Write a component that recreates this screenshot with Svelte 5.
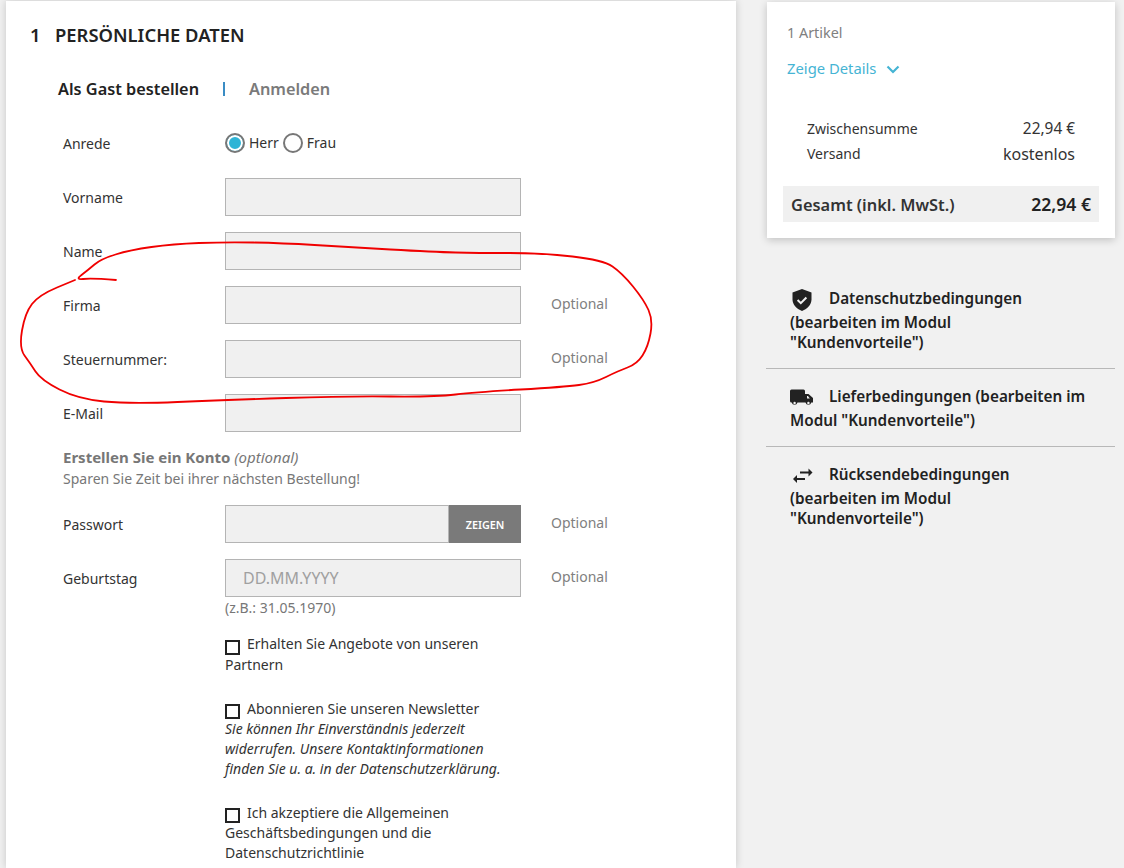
<script>
	const fields = [
		{ label: 'Vorname' },
		{ label: 'Name' },
		{ label: 'Firma', optional: true },
		{ label: 'Steuernummer:', optional: true },
		{ label: 'E-Mail' }
	];

	// hand drawn circle around the tax number fields
	const pts = [
		[116, 280], [91, 278], [75, 280], [88, 270], [101, 259], [130, 250], [173, 244], [225, 242],
		[282, 243], [347, 247], [434, 252], [477, 253], [542, 253], [603, 260], [622, 273], [644, 300],
		[653, 320], [648, 347], [637, 364], [618, 371], [594, 383], [564, 387], [477, 392], [434, 397],
		[347, 396], [225, 400], [130, 404], [78, 399], [41, 380], [30, 363], [19, 348], [25, 313],
		[39, 295], [75, 280]
	];
	let scribble = `M${pts[0][0]} ${pts[0][1]}`;
	for (let i = 1; i < pts.length - 1; i++) {
		const mx = (pts[i][0] + pts[i + 1][0]) / 2;
		const my = (pts[i][1] + pts[i + 1][1]) / 2;
		scribble += ` Q${pts[i][0]} ${pts[i][1]} ${mx} ${my}`;
	}
	scribble += ` L${pts[pts.length - 1][0]} ${pts[pts.length - 1][1]}`;
</script>

<div class="page">
	<main class="panel">
		<h2><span class="num">1</span>PERSÖNLICHE DATEN</h2>

		<div class="tabs">
			<span class="active">Als Gast bestellen</span>
			<span class="sep"></span>
			<span class="other">Anmelden</span>
		</div>

		<form>
			<div class="row anrede">
				<span class="label">Anrede</span>
				<div class="radios">
					<span class="radio checked"></span><span>Herr</span>
					<span class="radio"></span><span>Frau</span>
				</div>
			</div>

			{#each fields as f}
				<div class="row">
					<span class="label">{f.label}</span>
					<div class="input"></div>
					{#if f.optional}<span class="opt">Optional</span>{/if}
				</div>
			{/each}

			<div class="konto">
				<div class="konto-title"><b>Erstellen Sie ein Konto</b> <i>(optional)</i></div>
				<div>Sparen Sie Zeit bei ihrer nächsten Bestellung!</div>
			</div>

			<div class="row">
				<span class="label">Passwort</span>
				<div class="pw">
					<div class="input"></div>
					<button type="button">ZEIGEN</button>
				</div>
				<span class="opt">Optional</span>
			</div>

			<div class="row">
				<span class="label">Geburtstag</span>
				<div class="input date">DD.MM.YYYY</div>
				<span class="opt">Optional</span>
			</div>
			<div class="hint">(z.B.: 31.05.1970)</div>

			<div class="checks">
				<div class="check">
					<span class="box"></span>Erhalten Sie Angebote von unseren Partnern
				</div>
				<div class="check">
					<span class="box"></span>Abonnieren Sie unseren Newsletter
					<em>Sie können Ihr Einverständnis jederzeit widerrufen. Unsere Kontaktinformationen finden Sie u. a. in der Datenschutzerklärung.</em>
				</div>
				<div class="check">
					<span class="box"></span>Ich akzeptiere die Allgemeinen Geschäftsbedingungen und die Datenschutzrichtlinie
				</div>
			</div>
		</form>
	</main>

	<aside>
		<section class="card">
			<div class="count">1 Artikel</div>
			<div class="details">
				Zeige Details
				<svg width="14" height="9" viewBox="0 0 14 9"><path d="M1.5 1.5 7 7l5.5-5.5" fill="none" stroke="currentColor" stroke-width="2.2" /></svg>
			</div>
			<div class="sum"><span>Zwischensumme</span><span class="val">22,94 €</span></div>
			<div class="sum ship"><span>Versand</span><span class="val">kostenlos</span></div>
			<div class="total"><span>Gesamt (inkl. MwSt.)</span><span class="tval">22,94 €</span></div>
		</section>

		<ul class="info">
			<li>
				<svg class="ic" width="23" height="22" viewBox="0 0 23 22"><path fill="#222" d="M12 0l9.500 3.600v6.700c0 5.300-3.900 9.600-9.500 11.700C6.400 19.900 2.500 15.600 2.500 10.300V3.600z" /><path d="m7.600 11 3.200 3.200 5.600-5.700" fill="none" stroke="#f1f1f1" stroke-width="2" /></svg>
				Datenschutzbedingungen (bearbeiten im Modul "Kundenvorteile")
			</li>
			<li>
				<svg class="ic" width="23" height="22" viewBox="0 0 23 22"><path fill="#222" d="M1.500 2.500h12a1.500 1.500 0 0 1 1.500 1.500v3h3.500L23 11v4.500h-1.700a3 3 0 0 1-5.800 0H7.500a3 3 0 0 1-5.800 0H1.500A1.500 1.500 0 0 1 0 14V4a1.500 1.500 0 0 1 1.500-1.500z" /><circle cx="4.600" cy="16" r="1.200" fill="#f1f1f1" /><circle cx="18.400" cy="16" r="1.200" fill="#f1f1f1" /><path fill="#f1f1f1" d="M17 9h1l1.800 2.500H17z" /></svg>
				Lieferbedingungen (bearbeiten im Modul "Kundenvorteile")
			</li>
			<li>
				<svg class="ic" width="23" height="22" viewBox="0 0 23 22"><path fill="#222" d="M10 6.500h8.500v-3l4 4-4 4v-3H10zM15 13H7v-3l-4 4 4 4v-3h8z" /></svg>
				Rücksendebedingungen (bearbeiten im Modul "Kundenvorteile")
			</li>
		</ul>
	</aside>

	<svg class="scribble" width="1124" height="868" viewBox="0 0 1124 868"><path d={scribble} fill="none" stroke="#f00000" stroke-width="1.8" stroke-linecap="round" stroke-linejoin="round" /></svg>
</div>

<style>
	:global(body) {
		background: #f1f1f1;
	}

	.page {
		position: relative;
		width: 1124px;
		height: 868px;
		overflow: hidden;
		display: flex;
		align-items: flex-start;
		font-family: 'Noto Sans', sans-serif;
		font-size: 14px;
		color: #333;
		background: #f1f1f1;
	}

	.panel {
		width: 730px;
		height: 867px;
		margin: 1px 0 0 6px;
		background: #fff;
		box-shadow: 0 0 8px rgba(0, 0, 0, 0.18);
		box-sizing: border-box;
		padding: 22px 0 0 24px;
		flex: none;
	}

	h2 {
		margin: 0;
		font-size: 18.4px;
		line-height: 24px;
		font-weight: 600;
		color: #222;
	}

	.num {
		display: inline-block;
		width: 25px;
	}

	.tabs {
		display: flex;
		align-items: center;
		margin: 30px 0 0 28px;
		font-size: 16.3px;
		line-height: 24px;
		font-weight: 600;
	}

	.active {
		color: #222;
	}

	.sep {
		width: 2px;
		height: 14px;
		background: #3a8cc4;
		margin: 0 24px;
	}

	.other {
		color: #7a7a7a;
	}

	form {
		margin: 0 0 0 33px;
	}

	.row {
		display: flex;
		align-items: center;
		height: 38px;
		margin-bottom: 16px;
	}

	.anrede {
		height: 24px;
		margin: 30px 0 23px;
	}

	.label {
		width: 162px;
		flex: none;
		color: #333;
	}

	.radios {
		display: flex;
		align-items: center;
		gap: 4px;
		margin-top: -1px;
	}

	.radio {
		width: 20px;
		height: 20px;
		box-sizing: border-box;
		border: 2px solid #777;
		border-radius: 50%;
		background: #fff;
	}

	.radio.checked {
		background: #2fb4d6;
		box-shadow: inset 0 0 0 2px #fff;
	}

	.input {
		width: 296px;
		height: 38px;
		box-sizing: border-box;
		border: 1px solid #b4b4b4;
		background: #f0f0f0;
		flex: none;
	}

	.opt {
		margin: -4px 0 0 30px;
		color: #808080;
	}

	.konto {
		margin: -1px 0 16px;
		color: #777;
		line-height: 20px;
	}

	.konto-title {
		font-size: 15px;
		line-height: 21px;
		margin: 1px 0;
	}

	.konto b {
		font-weight: 700;
	}

	.pw {
		display: flex;
		width: 296px;
		height: 38px;
		flex: none;
	}

	.pw .input {
		width: 224px;
	}

	.pw button {
		width: 72px;
		border: none;
		padding: 0;
		background: #7a7a7a;
		color: #fff;
		font-family: inherit;
		font-size: 10.8px;
		font-weight: 600;
	}

	.date {
		font-size: 16px;
		line-height: 36px;
		padding-left: 17px;
		color: #a0a0a0;
	}

	.hint {
		margin: -16px 0 0 162px;
		line-height: 22px;
		color: #777;
	}

	.checks {
		margin: 14px 0 0 162px;
		width: 285px;
		line-height: 20px;
		display: flex;
		flex-direction: column;
		gap: 24px;
	}

	.check:first-child {
		line-height: 21px;
	}

	.box {
		display: inline-block;
		width: 15px;
		height: 15px;
		box-sizing: border-box;
		border: 2px solid #222;
		margin: 0 7px -1px 0;
		vertical-align: -4px;
	}

	.check:first-child .box {
		vertical-align: -5px;
	}

	.check em {
		display: block;
		color: #333;
	}

	aside {
		width: 348px;
		margin: 2px 0 0 31px;
		flex: none;
	}

	.card {
		height: 236px;
		box-sizing: border-box;
		background: #fff;
		box-shadow: 0 2px 8px rgba(0, 0, 0, 0.2);
		padding: 20px 16px 0;
	}

	.count {
		margin-left: 4px;
		font-size: 14.4px;
		color: #808080;
		line-height: 22px;
	}

	.details {
		margin: 13px 0 0 4px;
		font-size: 14.8px;
		color: #45b4d4;
		line-height: 22px;
		display: flex;
		align-items: center;
		gap: 10px;
	}

	.details svg {
		margin-top: 3px;
	}

	.sum {
		display: flex;
		justify-content: space-between;
		margin: 39px 24px 0;
		line-height: 22px;
	}

	.sum .val {
		font-size: 15.4px;
	}

	.sum.ship {
		margin-top: 3px;
	}

	.ship .val {
		font-size: 16px;
	}

	.total {
		display: flex;
		justify-content: space-between;
		align-items: center;
		margin-top: 21px;
		height: 36px;
		padding: 0 8px;
		background: #f0f0f0;
		font-size: 16.4px;
		font-weight: 600;
	}

	.tval {
		font-size: 17.6px;
		color: #222;
	}

	.info {
		list-style: none;
		margin: 33px 0 0 -1px;
		padding: 0;
		font-size: 15.3px;
		font-weight: 600;
		color: #222;
		line-height: 20px;
	}

	.info li {
		padding: 17px 28px 16px 24px;
		border-bottom: 1px solid #b8b8b8;
	}

	.info li:last-child {
		border-bottom: none;
	}

	.ic {
		vertical-align: -8px;
		margin: 0 12px 1px 0;
	}

	.scribble {
		position: absolute;
		left: 0;
		top: 0;
		pointer-events: none;
	}
</style>
